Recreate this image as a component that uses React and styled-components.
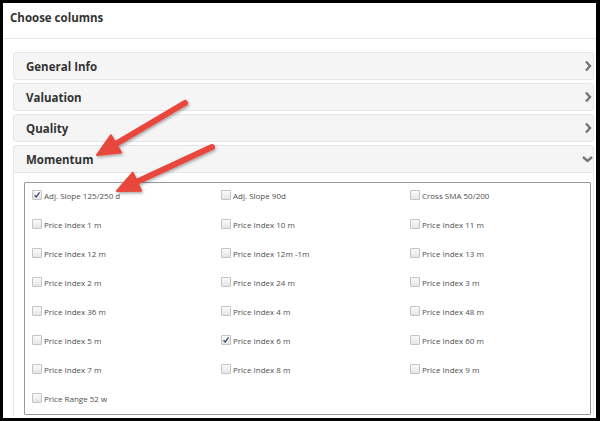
import React from 'react';
import styled, { createGlobalStyle } from 'styled-components';

const Global = createGlobalStyle`
  html, body {
    margin: 0;
    padding: 0;
    background: #000;
  }
  body {
    font-family: 'Open Sans', 'DejaVu Sans', sans-serif;
  }
`;

const Window = styled.div`
  position: relative;
  box-sizing: border-box;
  margin: 3px 4px 0 3px;
  height: 415px;
  background: #fff;
  overflow: hidden;
`;

const Header = styled.div`
  box-sizing: border-box;
  height: 36px;
  padding: 7px 7px 0;
  border-bottom: 1px solid #e8e8e8;
  font-size: 11.5px;
  font-weight: 700;
  color: #333;
`;

const Body = styled.div`
  display: flex;
  flex-direction: column;
  gap: 3px;
  padding: 13px 2px 0 10px;
`;

const PanelHead = styled.div`
  box-sizing: border-box;
  height: 28px;
  display: flex;
  align-items: center;
  justify-content: space-between;
  padding: 0 0 0 12px;
  background: #f5f5f5;
  border: 1px solid #e6e6e6;
  border-radius: 3px 3px ${(p) => (p.open ? '0 0' : '3px 3px')};
  font-size: 11.5px;
  font-weight: 700;
  color: #333;
`;

const PanelBody = styled.div`
  border-left: 1px solid #e6e6e6;
  border-right: 1px solid #e6e6e6;
  padding: 9px 2px 0 10px;
`;

const Box = styled.div`
  display: grid;
  grid-template-columns: repeat(3, 189px);
  row-gap: 13px;
  padding: 4px 0 8px 7px;
  border: 1px solid #9a9a9a;
  border-radius: 1px;
`;

const Item = styled.label`
  height: 16px;
  display: flex;
  align-items: center;
  font-size: 8px;
  color: #4f4f4f;
`;

const Check = styled.span`
  box-sizing: border-box;
  width: 10px;
  height: 10px;
  margin-right: 2px;
  display: inline-flex;
  align-items: center;
  justify-content: center;
  border: 1px solid #c4c4c4;
  border-radius: 1px;
  background: linear-gradient(#fafafa, #e6e6e6);
`;

const Arrows = styled.svg`
  position: absolute;
  left: 0;
  top: 0;
  pointer-events: none;
`;

const Chevron = ({ down }) => (
  <svg width="12" height="12" viewBox="0 0 12 12">
    <path
      d={down ? 'M2 4 L6.5 8 L11 4' : 'M5 1.5 L9 6 L5 10.5'}
      fill="none"
      stroke="#777"
      strokeWidth="2.4"
    />
  </svg>
);

const items = [
  ['Adj. Slope 125/250 d', true],
  ['Adj. Slope 90d'],
  ['Cross SMA 50/200'],
  ['Price Index 1 m'],
  ['Price Index 10 m'],
  ['Price Index 11 m'],
  ['Price Index 12 m'],
  ['Price Index 12m -1m'],
  ['Price Index 13 m'],
  ['Price Index 2 m'],
  ['Price Index 24 m'],
  ['Price Index 3 m'],
  ['Price Index 36 m'],
  ['Price Index 4 m'],
  ['Price Index 48 m'],
  ['Price Index 5 m'],
  ['Price Index 6 m', true],
  ['Price Index 60 m'],
  ['Price Index 7 m'],
  ['Price Index 8 m'],
  ['Price Index 9 m'],
  ['Price Range 52 w'],
];

const Arrow = ({ x1, y1, x2, y2 }) => {
  const a = Math.atan2(y2 - y1, x2 - x1);
  const len = 22;
  const w = 10;
  const bx = x2 - Math.cos(a) * len;
  const by = y2 - Math.sin(a) * len;
  const px = Math.sin(a) * w;
  const py = -Math.cos(a) * w;
  return (
    <g filter="url(#sh)">
      <line x1={x1} y1={y1} x2={bx} y2={by} stroke="#e8463c" strokeWidth="6" strokeLinecap="round" />
      <polygon
        points={`${x2},${y2} ${bx + px},${by + py} ${bx - px},${by - py}`}
        fill="#e8463c"
        stroke="#e8463c"
        strokeWidth="2"
        strokeLinejoin="round"
      />
    </g>
  );
};

export default function App() {
  return (
    <>
      <Global />
      <Window>
        <Header>Choose columns</Header>
        <Body>
          <PanelHead>General Info<Chevron /></PanelHead>
          <PanelHead>Valuation<Chevron /></PanelHead>
          <PanelHead>Quality<Chevron /></PanelHead>
          <div>
            <PanelHead open>Momentum<Chevron down /></PanelHead>
            <PanelBody>
              <Box>
                {items.map(([name, on]) => (
                  <Item key={name}>
                    <Check>
                      {on && (
                        <svg width="8" height="8" viewBox="0 0 8 8">
                          <path d="M1.5 4.2 L3.2 6 L6.6 1.4" fill="none" stroke="#3a4f7a" strokeWidth="1.3" />
                        </svg>
                      )}
                    </Check>
                    {name}
                  </Item>
                ))}
              </Box>
            </PanelBody>
          </div>
        </Body>
        <Arrows width="597" height="415">
          <defs>
            <filter id="sh" x="-20%" y="-20%" width="140%" height="140%">
              <feDropShadow dx="1" dy="1.5" stdDeviation="1.5" floodColor="#000" floodOpacity="0.35" />
            </filter>
          </defs>
          <Arrow x1={182} y1={100} x2={94} y2={152} />
          <Arrow x1={209} y1={144} x2={114} y2={188} />
        </Arrows>
      </Window>
    </>
  );
}
